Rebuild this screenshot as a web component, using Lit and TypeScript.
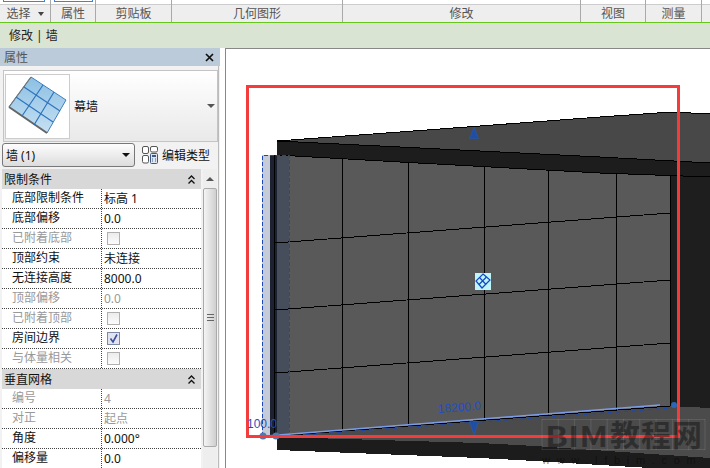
import { LitElement, html, css, svg } from "lit";
import { customElement } from "lit/decorators.js";

type Row = { label: string; value?: string; check?: "on" | "off"; off?: boolean };
type Group = { title: string; rows: Row[] };

// widths include the 1px separator on the right of each ribbon group
const RIBBON = [
  { label: "选择", width: 51, arrow: true, btn: "first" },
  { label: "属性", width: 45, btn: "second" },
  { label: "剪贴板", width: 76 },
  { label: "几何图形", width: 171 },
  { label: "修改", width: 238 },
  { label: "视图", width: 65 },
  { label: "测量", width: 56 },
  { label: "", width: 8 },
];

const GROUPS: Group[] = [
  {
    title: "限制条件",
    rows: [
      { label: "底部限制条件", value: "标高 1" },
      { label: "底部偏移", value: "0.0" },
      { label: "已附着底部", check: "off", off: true },
      { label: "顶部约束", value: "未连接" },
      { label: "无连接高度", value: "8000.0" },
      { label: "顶部偏移", value: "0.0", off: true },
      { label: "已附着顶部", check: "off", off: true },
      { label: "房间边界", check: "on" },
      { label: "与体量相关", check: "off", off: true },
    ],
  },
  {
    title: "垂直网格",
    rows: [
      { label: "编号", value: "4", off: true },
      { label: "对正", value: "起点", off: true },
      { label: "角度", value: "0.000°" },
      { label: "偏移量", value: "0.0" },
    ],
  },
];

const chevrons = html`<svg width="7" height="9" viewBox="0 0 7 9">
  <path d="M.5 4 3.5 1 6.5 4M.5 8.5 3.5 5.5 6.5 8.5" fill="none" stroke="#111" stroke-width="1.3" />
</svg>`;

@customElement("app-root")
export class AppRoot extends LitElement {
  static styles = css`
    :host {
      display: block;
      width: 710px;
      height: 468px;
      overflow: hidden;
      background: #fff;
      font: 12px "Noto Sans", "Noto Sans CJK SC", sans-serif;
      color: #111;
    }
    .ribbon {
      height: 22px;
      display: flex;
      background: #fff;
    }
    .tab {
      box-sizing: border-box;
      height: 22px;
      border-right: 1px solid #a9a9a9;
      display: flex;
      flex-direction: column;
    }
    .tab:last-child {
      border-right: 0;
    }
    .top {
      height: 4px;
      flex: none;
    }
    .btn {
      box-sizing: border-box;
      display: block;
      height: 2px;
      border: 1px solid #4483cc;
      border-top: 0;
    }
    .btn.first {
      margin: 0 5px 0 3px;
    }
    .btn.second {
      margin: 0 2px 0 3px;
    }
    .label {
      flex: 1;
      border-top: 1px solid #ccc;
      background: #eee;
      color: #555;
      line-height: 17px;
      display: flex;
      justify-content: center;
      align-items: center;
      gap: 7px;
    }
    .arrow {
      width: 0;
      height: 0;
      border: 3.5px solid transparent;
      border-top: 4px solid #444;
      border-bottom: 0;
    }
    .context {
      height: 26px;
      box-sizing: border-box;
      border-top: 1px solid #66c61c;
      background: #dae4d3;
      padding-left: 9px;
      line-height: 25px;
      color: #222;
    }
    .main {
      display: flex;
      height: 420px;
    }
    .panel {
      width: 220px;
      flex: none;
      background: #f2f2f2;
    }
    .head {
      height: 18px;
      background: #bccbda;
      display: flex;
      align-items: center;
      justify-content: space-between;
      padding: 0 6px 0 4px;
      color: #555;
    }
    .body {
      padding: 4px 0 0 2px;
      border-right: 1px solid #bbb;
      margin-right: 1px;
      height: 398px;
    }
    .type {
      box-sizing: border-box;
      height: 72px;
      margin-left: 1px;
      width: 215px;
      border: 1px solid #c4c4c4;
      background: linear-gradient(#fff, #e9e9e9);
      display: flex;
      align-items: center;
      padding-left: 1px;
      gap: 4px;
    }
    .thumb {
      width: 65px;
      height: 65px;
      box-sizing: border-box;
      border: 1px solid #ccc;
      background: #fff;
      display: block;
    }
    .type span {
      flex: 1;
    }
    .type .arrow {
      margin-right: 2px;
      border-width: 4px;
      border-top-color: #555;
    }
    .select {
      display: flex;
      align-items: center;
      height: 26px;
      margin-bottom: 1px;
    }
    .combo {
      box-sizing: border-box;
      width: 133px;
      height: 24px;
      border: 1px solid #777;
      border-radius: 3px;
      background: linear-gradient(#fdfdfd, #dcdcdc);
      display: flex;
      align-items: center;
      justify-content: space-between;
      padding: 0 4px 0 3px;
    }
    .combo .arrow {
      border-width: 4px;
      border-top-color: #111;
    }
    .edit {
      display: flex;
      align-items: center;
      gap: 4px;
      margin-left: 7px;
    }
    .sheet {
      display: flex;
      gap: 2px;
    }
    .table {
      width: 199px;
      background: #fff;
    }
    .group {
      box-sizing: border-box;
      height: 20px;
      background: #d8d8d8;
      display: flex;
      align-items: center;
      justify-content: space-between;
      padding: 0 6px 0 2px;
    }
    .row {
      box-sizing: border-box;
      height: 20px;
      display: grid;
      grid-template-columns: 100px 1fr;
      border-bottom: 1px dotted #444;
      line-height: 18px;
    }
    .row > div:first-child {
      padding-left: 10px;
      border-right: 1px dotted #444;
    }
    .row > div:last-child {
      padding-left: 2px;
      display: flex;
      align-items: center;
    }
    .row.off {
      color: #999;
    }
    .box {
      box-sizing: border-box;
      width: 13px;
      height: 13px;
      margin-left: 3px;
      border: 1px solid #b0b0b0;
      background: linear-gradient(#ececec, #fbfbfb);
      display: block;
    }
    .box.on {
      border-color: #7d8aa6;
      background: #e2e5ee;
    }
    .scroll {
      width: 14px;
      display: flex;
      flex-direction: column;
      align-items: center;
      background: #eee;
    }
    .scroll i {
      height: 19px;
      flex: none;
      display: flex;
      align-items: center;
    }
    .scroll i::before {
      content: "";
      border: 4px solid transparent;
      border-bottom: 4px solid #555;
      border-top: 0;
    }
    .bar {
      box-sizing: border-box;
      width: 14px;
      height: 259px;
      border: 1px solid #aaa;
      border-radius: 2px;
      background: linear-gradient(90deg, #f4f4f4, #cfcfcf);
      display: flex;
      align-items: center;
      justify-content: center;
    }
    .bar::after {
      content: "";
      width: 7px;
      height: 7px;
      background: repeating-linear-gradient(#666 0 1px, transparent 1px 3px);
    }
    .gap {
      width: 5px;
      flex: none;
      background: #fff;
    }
    .view {
      flex: 1;
      display: block;
      width: 485px;
      height: 420px;
    }
    .dim {
      font: 12px "Liberation Sans", sans-serif;
      fill: #1c50c4;
    }
    .mark {
      font: 700 30px "Noto Sans CJK SC", sans-serif;
      letter-spacing: 1px;
      fill: rgba(0, 0, 0, 0.38);
    }
    .mark.latin {
      font-size: 28px;
      letter-spacing: 0;
    }
    .url {
      font: 11px "Liberation Sans", sans-serif;
      letter-spacing: 6.7px;
      fill: rgba(0, 0, 0, 0.42);
    }
  `;

  renderRow(r: Row) {
    let value = html`${r.value ?? ""}`;
    if (r.check === "off") value = html`<span class="box"></span>`;
    if (r.check === "on") {
      value = html`<svg class="box on" viewBox="0 0 11 11">
        <path d="M2.5 5.5 5 9 9 1.5" fill="none" stroke="#3b4fa0" stroke-width="1.6" />
      </svg>`;
    }
    return html`<div class="row ${r.off ? "off" : ""}">
      <div>${r.label}</div>
      <div>${value}</div>
    </div>`;
  }

  renderThumb() {
    return html`<svg class="thumb" viewBox="0 0 63 63">
      <defs>
        <linearGradient id="glass" x1="0" y1="0" x2="0" y2="1">
          <stop offset="0" stop-color="#8cc0e4" />
          <stop offset="1" stop-color="#c6e0f3" />
        </linearGradient>
      </defs>
      <polygon points="25,2 60,25 41,58 3,32" fill="url(#glass)" stroke="#3f7fbd" />
      <path d="M3 32 41 58" stroke="#666" stroke-width="2" fill="none" />
      <path d="M3 32 25 2" stroke="#777" stroke-width="1.2" fill="none" />
      <path
        d="M18 12 54 36M10 22 47 47M37 10 16 41M48 17 28 50"
        stroke="#2f74bd"
        stroke-width="1.2"
        fill="none"
      />
    </svg>`;
  }

  renderEditIcon() {
    return html`<svg width="16" height="18" viewBox="0 0 16 18">
      <g fill="#fff" stroke="#555">
        <rect x="0.5" y="0.5" width="6" height="7" rx="1.5" />
        <rect x="0.5" y="9.5" width="6" height="7.5" rx="1.5" />
        <rect x="8.5" y="0.5" width="7" height="5.5" rx="1.5" />
      </g>
      <rect x="8.5" y="7.5" width="7" height="10" rx="1" fill="#dfe6f2" stroke="#3b5a86" />
      <rect x="10" y="9" width="4" height="2" fill="#3b5a86" />
      <path d="M10 13h1M13 13h1M10 15h1M13 15h1" stroke="#3b5a86" />
    </svg>`;
  }

  renderPanel() {
    return html`<div class="panel">
      <div class="head">
        <span>属性</span>
        <svg width="9" height="9" viewBox="0 0 9 9">
          <path d="M1 1 8 8M8 1 1 8" stroke="#111" stroke-width="1.7" />
        </svg>
      </div>
      <div class="body">
        <div class="type">
          ${this.renderThumb()}
          <span>幕墙</span>
          <div class="arrow"></div>
        </div>
        <div class="select">
          <div class="combo"><span>墙 (1)</span><div class="arrow"></div></div>
          <div class="edit">${this.renderEditIcon()}<span>编辑类型</span></div>
        </div>
        <div class="sheet">
          <div class="table">
            ${GROUPS.map(
              (g) => html`<div class="group"><span>${g.title}</span>${chevrons}</div>
                ${g.rows.map((r) => this.renderRow(r))}`
            )}
          </div>
          <div class="scroll"><i></i><div class="bar"></div></div>
        </div>
      </div>
    </div>`;
  }

  renderWall() {
    const mullions = [342, 408, 484, 548, 616];
    return svg`<g shape-rendering="crispEdges">
      <polygon points="277,141 400,132 600,117 672,112 710,114 710,163 600,157 400,147" fill="#484848" />
      <polygon points="277,141 400,147 600,157 710,163 710,177 600,173 400,162 277,155" fill="#1d1d1d" />
      <polygon points="277,155 400,162 600,173 670,175 670,406 277,436" fill="#595959" />
      <polygon points="670,175 710,177 710,408 670,406" fill="#1e1e1e" />
      <polygon points="277,436 670,406 710,408 710,458 535,446 480,443 277,437" fill="#4b4b4b" />
      <polygon points="277,437 480,443 535,446 710,458 710,468 650,468 535,461 480,458 277,450" fill="#1c1c1c" />
      <rect x="262" y="155" width="8" height="280" fill="#c5cbd8" />
      <rect x="270" y="155" width="7" height="280" fill="#1c2230" />
      <rect x="274" y="155" width="1" height="280" fill="#000" />
      <rect x="277" y="155" width="12" height="280" fill="#474e5b" />
      <g fill="none" stroke="#000">
        <path d="M277 141 400 132 600 117 672 112 710 114" />
        <path d="M277 141 400 147 600 157 710 163" />
        <path d="M277 155 400 162 600 173 710 177" />
        <path d="M277 436 670 406" />
        <path d="M275 243 670 213" />
        <path d="M275 310 670 280" />
        <path d="M275 373 670 343" />
        ${mullions.map((x) => svg`<path d="M${x} ${162 + (x - 400) * 0.055}V${436 - (x - 277) * 0.0763}" />`)}
        <path d="M670 175V406" />
      </g>
    </g>`;
  }

  renderWatermark() {
    const cells = Array.from({ length: 11 }, (_, i) => 542 + i * 16.3);
    return svg`<g>
      <path
        d="M542 419.5H705M542 449.5H705 ${cells.map((x) => `M${x} 419V450`).join("")}"
        fill="none"
        stroke="rgba(255,255,255,0.1)"
      />
      <text class="mark latin" x="545" y="447" textLength="63" lengthAdjust="spacingAndGlyphs">BIM</text>
      <text class="mark" x="610" y="446">教程网</text>
      <text class="url" x="542" y="464">www.lfbim.com</text>
    </g>`;
  }

  renderView() {
    return html`<svg class="view" viewBox="225 48 485 420">
      <path d="M225.5 48V468M225 48.5H710" stroke="#888" fill="none" />
      ${this.renderWall()}
      <path d="M262.5 436V155.5H289.5V432" fill="none" stroke="#1a48b8" stroke-dasharray="4 2" />
      <path d="M289 436 672 408" fill="none" stroke="#1a48b8" stroke-dasharray="4 4" />
      <path d="M266 436 660 405" fill="none" stroke="#7c9ce6" stroke-width="1.6" />
      <circle cx="263" cy="436" r="3.5" fill="#5478a8" />
      <circle cx="276" cy="436" r="3.5" fill="#5478a8" />
      <circle cx="674" cy="405" r="3" fill="#2a68b4" />
      <polygon points="474,127 469.5,138.5 478.5,138.5" fill="#1e4ea6" stroke="#2a5cb4" stroke-width="0.5" />
      <rect x="247.5" y="86.5" width="431" height="350" fill="none" stroke="#f33c3c" stroke-width="3" />
      <polygon points="469.5,421.5 478.5,421.5 474,435" fill="#1e4ea6" stroke="#2a5cb4" stroke-width="0.5" />
      <text class="dim" transform="translate(438 413) rotate(-4.5)">18200.0</text>
      <text class="dim" x="247" y="428">100.0</text>
      <rect x="475" y="273" width="16" height="17" fill="#bdf5fa" />
      <g fill="none" stroke="#1446c8" stroke-width="1.2">
        <polygon points="483,274 490,280 482,288 476,281" />
        <path d="M479.5 277.5 486 284.5M486.5 277 479 284.5" />
      </g>
      ${this.renderWatermark()}
    </svg>`;
  }

  render() {
    return html`
      <div class="ribbon">
        ${RIBBON.map(
          (t) => html`<div class="tab" style="width:${t.width}px">
            <div class="top">${t.btn ? html`<span class="btn ${t.btn}"></span>` : ""}</div>
            <div class="label">${t.label}${t.arrow ? html`<i class="arrow"></i>` : ""}</div>
          </div>`
        )}
      </div>
      <div class="context">修改 | 墙</div>
      <div class="main">
        ${this.renderPanel()}
        <div class="gap"></div>
        ${this.renderView()}
      </div>
    `;
  }
}
